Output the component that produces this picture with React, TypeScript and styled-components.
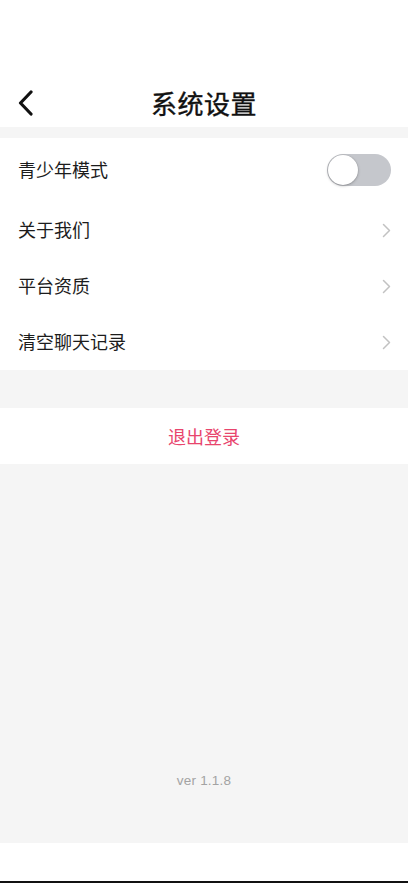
import React from "react";
import styled, { createGlobalStyle } from "styled-components";

const Global = createGlobalStyle`
  html, body { margin: 0; padding: 0; background: #ffffff; }
  body { font-family: "Noto Sans CJK SC", "Noto Sans", sans-serif; }
  * { box-sizing: border-box; }
`;

const Page = styled.div`
  width: 408px;
  height: 883px;
  display: flex;
  flex-direction: column;
  background: #ffffff;
  overflow: hidden;
`;

const Header = styled.header`
  padding-top: 78px;
  background: #ffffff;
`;

const NavBar = styled.div`
  position: relative;
  height: 49px;
  display: flex;
  align-items: center;
  justify-content: center;
`;

const BackButton = styled.button`
  position: absolute;
  left: 12px;
  top: 50%;
  transform: translateY(-50%);
  width: 26px;
  height: 30px;
  padding: 0;
  border: none;
  background: transparent;
  display: flex;
  align-items: center;
  justify-content: center;
`;

const Title = styled.h1`
  margin: 0;
  font-size: 26px;
  line-height: 30px;
  font-weight: 400;
  color: #111111;
  letter-spacing: 0.5px;
  -webkit-text-stroke: 0.4px #111111;
`;

const Spacer = styled.div<{ $h: number }>`
  height: ${(p) => p.$h}px;
  background: #f5f5f5;
  flex-shrink: 0;
`;

const List = styled.section`
  background: #ffffff;
  display: flex;
  flex-direction: column;
`;

const Row = styled.div<{ $h: number }>`
  height: ${(p) => p.$h}px;
  display: flex;
  align-items: center;
  justify-content: space-between;
  padding: 0 17px 0 18px;
`;

const RowLabel = styled.span`
  font-size: 18px;
  line-height: 22px;
  color: #1c1c1c;
  margin-top: -2px;
`;

const Track = styled.div`
  width: 64px;
  height: 32px;
  border-radius: 16px;
  background: #c5c7cc;
  padding: 1px;
  display: flex;
  align-items: center;
`;

const Knob = styled.div`
  width: 30px;
  height: 30px;
  border-radius: 50%;
  background: #ffffff;
  box-shadow: 0 1px 3px rgba(0, 0, 0, 0.25), 0 0 0 0.5px rgba(0, 0, 0, 0.08);
`;

const Logout = styled.button`
  height: 56px;
  border: none;
  background: #ffffff;
  font-family: inherit;
  font-size: 18px;
  color: #e8456d;
  display: flex;
  align-items: center;
  justify-content: center;
  padding: 0;
`;

const Fill = styled.div`
  flex: 1;
  background: #f5f5f5;
  display: flex;
  flex-direction: column;
  justify-content: flex-end;
  align-items: center;
  padding-bottom: 55px;
`;

const Version = styled.span`
  font-family: "Liberation Sans", Arial, sans-serif;
  font-size: 13.5px;
  color: #a3a3a3;
  letter-spacing: 0.2px;
`;

const Footer = styled.div`
  height: 40px;
  background: #ffffff;
  border-bottom: 2px solid #111111;
  flex-shrink: 0;
`;

const Chevron = () => (
  <svg width="9" height="15" viewBox="0 0 9 15" fill="none">
    <path d="M1.5 1.5L7.5 7.5L1.5 13.5" stroke="#c2c2c2" strokeWidth="1.5" strokeLinecap="round" strokeLinejoin="round" />
  </svg>
);

const items = ["关于我们", "平台资质", "清空聊天记录"];

export default function App() {
  return (
    <>
      <Global />
      <Page>
        <Header>
          <NavBar>
            <BackButton aria-label="back">
              <svg width="17" height="26" viewBox="0 0 17 26" fill="none">
                <path d="M14 2L3.5 13L14 24" stroke="#111" strokeWidth="3.2" strokeLinecap="round" strokeLinejoin="round" />
              </svg>
            </BackButton>
            <Title>系统设置</Title>
          </NavBar>
        </Header>
        <Spacer $h={11} />
        <List>
          <Row $h={64}>
            <RowLabel>青少年模式</RowLabel>
            <Track>
              <Knob />
            </Track>
          </Row>
          {items.map((t) => (
            <Row key={t} $h={56}>
              <RowLabel>{t}</RowLabel>
              <Chevron />
            </Row>
          ))}
        </List>
        <Spacer $h={38} />
        <Logout>退出登录</Logout>
        <Fill>
          <Version>ver 1.1.8</Version>
        </Fill>
        <Footer />
      </Page>
    </>
  );
}
